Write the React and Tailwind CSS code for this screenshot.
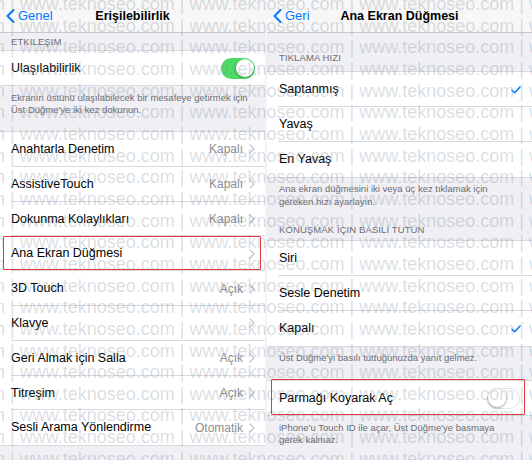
import React from "react";

const WM = "www.teknoseo.com | ";

function Chevron() {
  return (
    <svg width="6" height="10" viewBox="0 0 6 10" className="ml-[6px] shrink-0">
      <path d="M1 1 L5 5 L1 9" fill="none" stroke="#c7c7cc" strokeWidth="1.3" strokeLinecap="round" strokeLinejoin="round" />
    </svg>
  );
}

function Check() {
  return (
    <svg width="10" height="8" viewBox="0 0 10 8" className="shrink-0">
      <path d="M1 4.2 L3.7 6.8 L9 1" fill="none" stroke="#007aff" strokeWidth="1.5" strokeLinecap="round" strokeLinejoin="round" />
    </svg>
  );
}

function Toggle({ on }) {
  return on ? (
    <div className="w-[34px] h-[21px] rounded-full bg-[#4cd964] flex items-center justify-end p-[1.5px]">
      <div className="w-[18px] h-[18px] rounded-full bg-white shadow-[0_1px_3px_rgba(0,0,0,0.3)]" />
    </div>
  ) : (
    <div className="w-[33px] h-[21px] rounded-full bg-white border-[1.5px] border-[#e3e3e8] flex items-center justify-start">
      <div className="w-[18px] h-[18px] rounded-full bg-white shadow-[0_1px_3px_rgba(0,0,0,0.4)]" />
    </div>
  );
}

function NavBar({ back, title }) {
  return (
    <div className="h-[33px] bg-[#f7f7f7] border-b border-[#c8c7cc] grid grid-cols-[1fr_auto_1fr] items-center">
      <div className="flex items-center pl-[6px] text-[#007aff] text-[13px]">
        <svg width="9" height="14" viewBox="0 0 9 14" className="mr-[3px]">
          <path d="M7.5 1 L1.5 7 L7.5 13" fill="none" stroke="#007aff" strokeWidth="2" strokeLinecap="round" strokeLinejoin="round" />
        </svg>
        {back}
      </div>
      <div className="text-[12.5px] font-bold text-black">{title}</div>
      <div />
    </div>
  );
}

function Row({ label, value, chevron, check, toggle, pad = "pl-[11px] pr-[10px]", h = "h-[34.8px]", last, children }) {
  return (
    <div className={`relative bg-white ${pad} ${h} flex items-center`}>
      <span className="text-[12.5px] text-black flex-1">{label}</span>
      {value && <span className="text-[12px] text-[#8e8e93]">{value}</span>}
      {chevron && <Chevron />}
      {check && <Check />}
      {toggle}
      {!last && <div className="absolute bottom-0 right-0 left-[11px] h-px bg-[#d9d9de]" />}
      {children}
    </div>
  );
}

function Header({ children, className = "" }) {
  return <div className={`text-[9.5px] tracking-[0.1px] text-[#6d6d72] uppercase ${className}`}>{children}</div>;
}

function Footer({ children, className = "" }) {
  return <div className={`text-[9.5px] leading-[12px] text-[#6d6d72] ${className}`}>{children}</div>;
}

function LeftPanel() {
  const rows = [
    ["Anahtarla Denetim", "Kapalı"],
    ["AssistiveTouch", "Kapalı"],
    ["Dokunma Kolaylıkları", "Kapalı"],
    ["Ana Ekran Düğmesi", null],
    ["3D Touch", "Açık"],
    ["Klavye", null],
    ["Geri Almak için Salla", "Açık"],
    ["Titreşim", "Açık"],
    ["Sesli Arama Yönlendirme", "Otomatik"],
  ];
  return (
    <div className="w-[265px] flex flex-col bg-[#efeff4]">
      <NavBar back="Genel" title="Erişilebilirlik" />
      <Header className="h-[17px] pl-[11px] pt-[2px]">Etkileşim</Header>
      <div className="border-y border-[#d9d9de]">
        <Row label="Ulaşılabilirlik" h="h-[34px]" last toggle={<Toggle on />} />
      </div>
      <Footer className="h-[45px] pl-[11px] pr-[8px] pt-[6px]">
        Ekranın üstünü ulaşılabilecek bir mesafeye getirmek için Üst Düğme'ye iki kez dokunun.
      </Footer>
      <div className="border-y border-[#d9d9de]">
        {rows.map(([label, value], i) => (
          <Row key={label} label={label} value={value} chevron last={i === rows.length - 1}>
            {label === "Ana Ekran Düğmesi" && (
              <div className="absolute top-0 bottom-[1px] left-[3px] right-[4px] border-[1.5px] border-[#e8343b] rounded-[1px]" />
            )}
          </Row>
        ))}
      </div>
    </div>
  );
}

function RightPanel() {
  const rpad = "pl-[12px] pr-[11px]";
  return (
    <div className="flex-1 flex flex-col bg-[#efeff4]">
      <NavBar back="Geri" title="Ana Ekran Düğmesi" />
      <Header className="h-[38px] pl-[12px] flex items-end pb-[6px]">Tıklama Hızı</Header>
      <div className="border-y border-[#d9d9de]">
        <Row label="Saptanmış" check pad={rpad} h="h-[35px]" />
        <Row label="Yavaş" pad={rpad} h="h-[35px]" />
        <Row label="En Yavaş" pad={rpad} h="h-[35px]" last />
      </div>
      <Footer className="h-[62px] pl-[12px] pt-[4px] flex flex-col">
        <span className="leading-[13px]">
          Ana ekran düğmesini iki veya üç kez tıklamak için
          <br />
          gereken hızı ayarlayın.
        </span>
        <Header className="mt-auto mb-[4px]">Konuşmak İçin Basılı Tutun</Header>
      </Footer>
      <div className="border-y border-[#d9d9de]">
        <Row label="Siri" pad={rpad} h="h-[35px]" />
        <Row label="Sesle Denetim" pad={rpad} h="h-[35px]" />
        <Row label="Kapalı" check pad={rpad} h="h-[35px]" last />
      </div>
      <Footer className="h-[33px] pl-[12px] pt-[5px]">Üst Düğme'yi basılı tuttuğunuzda yanıt gelmez.</Footer>
      <div className="border-y border-[#d9d9de]">
        <Row label="Parmağı Koyarak Aç" pad="pl-[12px] pr-[12px]" h="h-[34px]" last toggle={<Toggle />}>
          <div className="absolute top-[-2px] bottom-0 left-[4px] right-[7px] border-[1.5px] border-[#e8343b] rounded-[1px]" />
        </Row>
      </div>
      <Footer className="pl-[12px] pr-[20px] pt-[6px]">
        iPhone'u Touch ID ile açar, Üst Düğme'ye basmaya
        <br />
        gerek kalmaz.
      </Footer>
    </div>
  );
}

function Watermark() {
  const line = WM.repeat(5);
  return (
    <div className="absolute inset-0 pointer-events-none overflow-hidden">
      <div className="mt-[-6px] ml-[-150px] flex flex-col">
        {Array.from({ length: 23 }).map((_, i) => (
          <div key={i} className="h-[21.67px] leading-[21.67px] text-[18px] whitespace-nowrap text-[rgba(120,135,150,0.28)]">
            {line}
          </div>
        ))}
      </div>
    </div>
  );
}

export default function App() {
  return (
    <div className="relative w-[532px] h-[460px] overflow-hidden bg-white flex font-['Liberation_Sans',Arial,sans-serif]">
      <LeftPanel />
      <div className="w-[2px] bg-[#f4f4f6]" />
      <RightPanel />
      <Watermark />
    </div>
  );
}
